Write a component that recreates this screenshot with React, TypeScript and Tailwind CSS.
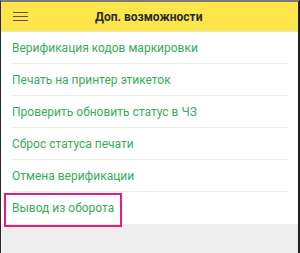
import React from "react";

const items = [
  "Верификация кодов маркировки",
  "Печать на принтер этикеток",
  "Проверить обновить статус в ЧЗ",
  "Сброс статуса печати",
  "Отмена верификации",
];

export default function App() {
  return (
    <div
      className="w-[300px] h-[253px] flex flex-col bg-[#eeeeee] border-l border-l-[#2a2a2a] border-r-2 border-r-[#1e1e1e] border-t-2 border-t-[#7a7a7a] overflow-hidden"
      style={{ fontFamily: "Roboto, 'Noto Sans', sans-serif" }}
    >
      <div className="h-[30px] shrink-0 bg-[#fde64b] flex items-center border-b border-b-[#e9e4c8]">
        <div className="w-[15px] ml-[12px] flex flex-col gap-[2.5px]">
          <div className="h-[1.5px] bg-[#5b5530]" />
          <div className="h-[1.5px] bg-[#5b5530]" />
          <div className="h-[1.5px] bg-[#5b5530]" />
        </div>
        <div className="ml-[67px] text-[12px] font-bold text-[#2b2b2b] leading-none">
          Доп. возможности
        </div>
      </div>
      <div className="bg-white">
        {items.map((t) => (
          <div key={t} className="h-[32px] pl-[11px] pr-[9px]">
            <div className="h-full flex items-center border-b border-b-[#ececec] text-[12px] text-[#38ab60] leading-none">
              {t}
            </div>
          </div>
        ))}
        <div className="relative h-[32px] pl-[11px] flex items-center text-[12px] text-[#38ab60] leading-none">
          Вывод из оборота
          <div className="absolute left-[3px] top-[1px] w-[118px] h-[34px] border-2 border-[#ec1a7e]" />
        </div>
      </div>
    </div>
  );
}
